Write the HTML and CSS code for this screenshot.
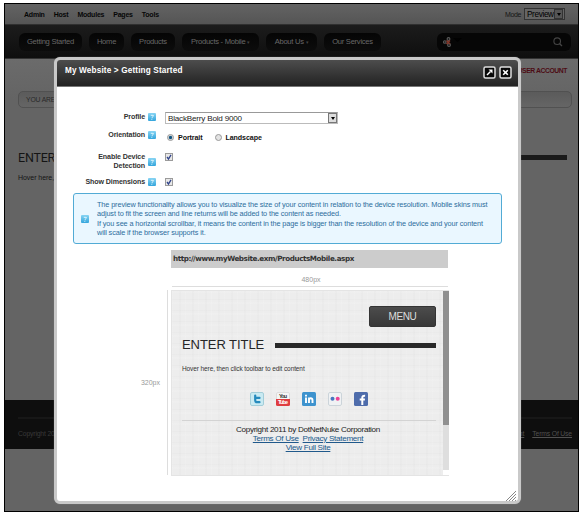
FILE: index.html
```html
<!DOCTYPE html>
<html lang="en">
<head>
<meta charset="utf-8">
<title>Getting Started</title>
<link rel="stylesheet" href="styles.css">
</head>
<body>
<svg width="0" height="0" class="defs">
  <defs>
    <linearGradient id="blue" x2="0" y2="1"><stop stop-color="#87d4f3"/><stop offset="1" stop-color="#34a5dc"/></linearGradient>
    <symbol id="help" viewBox="0 0 8 8"><rect width="8" height="8" rx="1" fill="url(#blue)"/><path d="M2.8 2.3h2.5v1L4 4.5v.8M3.8 6v.8" fill="none" stroke="#e9faff" stroke-width=".9"/></symbol>
    <symbol id="check" viewBox="0 0 8 8"><rect x=".5" y=".5" width="7" height="7" fill="#e8e8e8" stroke="#9b9b9b"/><path d="M2 4l1.5 2L6 1.8" fill="none" stroke="#32458b" stroke-width="1.3"/></symbol>
  </defs>
</svg>
<div class="frame">
  <header class="admin">
    <nav class="admin-links"><span>Admin</span><span>Host</span><span>Modules</span><span>Pages</span><span>Tools</span></nav>
    <div class="mode"><span>Mode</span><div class="mode-select"><span>Preview</span><i class="arrow"></i></div></div>
  </header>
  <nav class="main-nav">
    <span class="pill started">Getting Started</span><span class="pill home">Home</span><span class="pill products">Products</span><span class="pill mobile">Products - Mobile <i>▾</i></span><span class="pill about">About Us <i>▾</i></span><span class="pill services">Our Services</span>
    <div class="search">
      <svg width="22" height="12" viewBox="0 0 22 12"><g fill="none" stroke="#5c5c5c" stroke-width="1.1"><circle cx="2.8" cy="6" r="1.3"/><circle cx="6.5" cy="3" r="1.4"/><circle cx="7" cy="9" r="1.4"/></g><path d="M4.5 4.5l3.5 3.5M8 4.5L4.5 8" stroke="#85392c" stroke-width="1.5"/><path d="M11 2h9l-4.500 4z" fill="#010101"/></svg>
      <svg width="10" height="10" viewBox="0 0 10 10"><circle cx="4.2" cy="4.2" r="3.3" fill="none" stroke="#444" stroke-width="1.1"/><path d="M6.7 6.7L9 9" stroke="#444" stroke-width="1.3"/></svg>
    </div>
  </nav>
  <main class="page">
    <div class="account">USER ACCOUNT</div>
    <div class="crumb">YOU ARE</div>
    <div class="page-title"><h1>ENTER</h1><i></i></div>
    <p>Hover here,</p>
  </main>
  <footer class="footer"><div class="footer-row"><span>Copyright 2011</span><span class="footer-links"><u>Privacy Statement</u><u>Terms Of Use</u></span></div></footer>

  <section class="modal">
    <div class="modal-head">
      <h2>My Website &gt; Getting Started</h2>
      <svg width="13" height="13" viewBox="0 0 13 13"><rect x="1" y="1" width="11" height="11" rx="1.5" fill="#080808" stroke="#dedede" stroke-width="1.5"/><path d="M4 9l3.500-3.500" stroke="#fff" stroke-width="1.5"/><path d="M5.500 3.500H9.500v4z" fill="#fff"/></svg>
      <svg width="13" height="13" viewBox="0 0 13 13"><rect x="1" y="1" width="11" height="11" rx="1.5" fill="#080808" stroke="#dedede" stroke-width="1.5"/><path d="M4.200 4.200l4.600 4.600M8.800 4.200L4.200 8.800" stroke="#fff" stroke-width="1.6"/></svg>
    </div>
    <div class="form">
      <label>Profile</label><svg class="help"><use href="#help"/></svg>
      <div class="select"><span>BlackBerry Bold 9000</span><i class="arrow"></i></div>
      <label>Orientation</label><svg class="help"><use href="#help"/></svg>
      <div class="radios"><i class="radio on"></i><b>Portrait</b><i class="radio"></i><b>Landscape</b></div>
      <label class="two">Enable Device<br>Detection</label><svg class="help"><use href="#help"/></svg>
      <svg class="check raised"><use href="#check"/></svg>
      <label>Show Dimensions</label><svg class="help"><use href="#help"/></svg>
      <svg class="check"><use href="#check"/></svg>
    </div>
    <div class="info">
      <svg class="help"><use href="#help"/></svg>
      <div>The preview functionality allows you to visualize the size of your content in relation to the device resolution. Mobile skins must<br>adjust to fit the screen and line returns will be added to the content as needed.<br>If you see a horizontal scrollbar, it means the content in the page is bigger than the resolution of the device and your content<br>will scale if the browser supports it.</div>
    </div>
    <div class="url">http://www.myWebsite.exm/ProductsMobile.aspx</div>
    <div class="width">480px</div>
    <div class="stage">
      <div class="height">320px</div>
      <div class="device">
        <div class="screen">
          <div class="menu">MENU</div>
          <div class="title"><h3>ENTER TITLE</h3><i></i></div>
          <p>Hover here, then click toolbar to edit content</p>
          <div class="social">
            <svg viewBox="0 0 14 14"><rect x=".5" y=".5" width="13" height="13" rx="1.5" fill="#c9eaf2" stroke="#a3cdd8"/><path d="M5.200 3.500v4.700q0 2 2 2h2.300M5.200 5.900h4.300" fill="none" stroke="#258abd" stroke-width="2.200" stroke-linecap="round"/></svg>
            <svg viewBox="0 0 14 14"><rect x=".5" y=".5" width="13" height="13" rx="1.5" fill="#f5f5f5" stroke="#ddd"/><path d="M0 7h14v5.500q0 1.500-1.500 1.500h-11Q0 14 0 12.500z" fill="#df3d40"/><text x="7" y="5.900" class="yt" textLength="8">You</text><text x="7" y="12.300" class="yt tube" textLength="10">Tube</text></svg>
            <svg viewBox="0 0 14 14"><rect width="14" height="14" rx="1.5" fill="#3e93ce"/><path d="M4 5.500V11M4 2.800v1.700M7 11V5.500M7 8q0-1.800 1.700-1.800T10.500 8v3" fill="none" stroke="#fff" stroke-width="1.900"/></svg>
            <svg viewBox="0 0 14 14"><rect x=".5" y=".5" width="13" height="13" rx="1.5" fill="#f0f2f4" stroke="#ccd4da"/><circle cx="4.500" cy="6.800" r="2" fill="#4775be"/><circle cx="9.700" cy="6.800" r="2" fill="#ed4495"/></svg>
            <svg viewBox="0 0 14 14"><rect width="14" height="14" rx="1.5" fill="#4e6cab"/><path d="M8.300 13V5.700q0-2.200 2.800-2M5.700 7.600h5.200" fill="none" stroke="#fff" stroke-width="2"/></svg>
          </div>
          <div class="legal">Copyright 2011 by DotNetNuke Corporation<br><u>Terms Of Use</u>&nbsp; <u>Privacy Statement</u><br><u>View Full Site</u></div>
        </div>
        <div class="scroll"><i></i><b></b></div>
      </div>
    </div>
    <svg class="grip" width="12" height="12" viewBox="0 0 12 12"><path d="M0 11L10 1M3 11l7-7M6 11l4-4M9 11l1-1" stroke="#888" stroke-width="1"/></svg>
  </section>
</div>
</body>
</html>
```

FILE: styles.css
```css
* { box-sizing: border-box; }
body { margin: 0; padding: 3px 0 0 4px; background: #fff; font: 7px/9px "Liberation Sans", Arial, sans-serif; white-space: nowrap; overflow: hidden; height: 512px; }
h1, h2, h3, p { margin: 0; font-weight: normal; }
svg { display: block; flex: none; }
i { font-style: normal; flex: none; }
.defs { position: absolute; }
.frame { position: relative; width: 575px; height: 509px; border: 1px solid #000; background: #646464; overflow: hidden; }

.admin { height: 21px; padding: 0 13px 0 19px; display: flex; justify-content: space-between; align-items: center; background: linear-gradient(#636363, #555); border-bottom: 1px solid #303030; }
.admin-links { display: flex; gap: 9px; font-weight: bold; color: #070707; letter-spacing: -.22px; }
.mode { display: flex; align-items: center; gap: 3px; color: #151515; letter-spacing: -.4px; }
.mode-select { display: flex; align-items: center; justify-content: space-between; width: 41px; height: 12px; padding: 0 1px 0 2px; background: #656565; border: 1px solid #333; font-size: 8.2px; color: #000; letter-spacing: -.35px; }
.arrow { width: 9px; height: 10px; background: #ddd; border: 1px solid #777; display: grid; place-items: center; }
.arrow::after { content: ""; border: 2.5px solid transparent; border-top: 3px solid #000; border-bottom: 0; }
.mode .arrow { background: #555; border-color: #333; }

.main-nav { height: 34px; padding: 0 7px 0 14px; display: flex; align-items: center; background: linear-gradient(#1c1c1c, #0e0e0e); border-bottom: 1px solid #333; color: #686868; }
.pill { height: 18px; line-height: 18px; border-radius: 6px; background: linear-gradient(#050505, #0c0c0c); text-align: center; margin-right: 7px; letter-spacing: -.27px; font-size: 7.6px; }
.pill i { font-size: 5px; color: #444; }
.started { width: 63px; } .home { width: 35px; } .products { width: 44px; } .mobile { width: 77px; } .about { width: 51px; } .services { width: 57px; }
.search { margin-left: auto; width: 134px; height: 18px; border-radius: 6px; background: #060606; padding: 0 8px 0 5px; display: flex; align-items: center; justify-content: space-between; }

.page { height: 341px; padding: 6px 6px 0 13px; background: linear-gradient(#6b6b6b, #646464 40px); color: #141414; }
.account { text-align: right; padding-right: 5px; font-weight: bold; font-size: 6.8px; letter-spacing: -.42px; color: #4d0c14; line-height: 11px; }
.crumb { margin-top: 15px; height: 17px; border: 1px solid #515151; border-radius: 5px; background: linear-gradient(#5b5b5b, #656565); padding-left: 7px; line-height: 15px; font-size: 6.8px; letter-spacing: -.15px; color: #292929; }
.page-title { display: flex; align-items: center; margin: 39px 5px 0 0; height: 20px; }
.page-title h1 { width: 115px; font: 12.5px "Roboto", sans-serif; letter-spacing: -.2px; }
.page-title i { flex: 1; height: 5px; background: #1a1a1a; }
.page p { margin-top: 6px; font-size: 7px; letter-spacing: -.05px; }
.footer { height: 49px; background: #0e0e0e; padding: 17px 6px 0 13px; color: #393939; font-size: 6.8px; }
.footer-row { border-top: 2px solid #171717; padding-top: 10px; display: flex; justify-content: space-between; letter-spacing: -.15px; }
.footer-links { display: flex; gap: 8px; color: #515151; }

.modal { position: absolute; left: 49px; top: 53px; width: 467px; height: 447px; background: #fff; border: 3px solid #c9c9c9; border-radius: 6px; box-shadow: 0 0 1px #999; overflow: hidden; }
.modal-head { height: 27px; padding: 0 6px 0 8px; display: flex; align-items: center; gap: 3px; background: linear-gradient(#4d4d4d, #222); border-bottom: 1px solid #777; }
.modal-head svg { margin-top: -1px; }
.modal-head h2 { flex: 1; margin-top: -6px; font-size: 8.2px; font-weight: bold; color: #fff; letter-spacing: .15px; }
.form { margin-top: 22px; padding-left: 8px; display: grid; grid-template-columns: 80px 8px 1fr; grid-template-rows: 18px 18px 29px 14px; column-gap: 3px; font-size: 7.1px; color: #222; }
.form label { font-weight: bold; text-align: right; color: #333; align-self: start; padding-top: 4px; letter-spacing: -.1px; }
.help { width: 8px; height: 8px; margin-top: 4px; }
.form label.two { padding-top: 8px; }
.two + .help { margin-top: 13px; }
.select { margin: 3px 0 0 6px; width: 173px; height: 12px; padding: 0 0 0 2px; display: flex; align-items: center; justify-content: space-between; border: 1px solid #bbb; border-top-color: #999; font-size: 8.1px; letter-spacing: -.2px; color: #222; }
.radios { display: flex; align-items: center; height: 9px; margin: 6px 0 0 8px; }
.radios b { margin: 2px 0 0 4px; letter-spacing: -.09px; color: #111; }
.radio { width: 7px; height: 7px; border: 1px solid #999; border-radius: 50%; background: #e3e3e3; }
.radio.on { background: radial-gradient(circle, #115480 35%, #ddd 60%); }
.radio:nth-of-type(2) { margin-left: 12px; }
.check { width: 8px; height: 8px; margin: 4px 0 0 6px; }
.check.raised { margin-top: 8px; }

.info { margin: 5px 16px 0; height: 51px; border: 1.5px solid #52abd5; border-radius: 3px; background: #eaf7ff; padding: 1px 7px; display: flex; align-items: center; gap: 8px; color: #2c6d9d; font-size: 7.3px; letter-spacing: -.11px; line-height: 9.4px; }
.info .help { margin: 0; }
.url { margin: 6px 0 0 114px; width: 277px; height: 18px; background: #ccc; padding-left: 2px; font: bold 7.2px/18px "DejaVu Sans", sans-serif; letter-spacing: -.42px; color: #333; }
.width { margin-left: 115px; width: 276px; height: 19px; padding: 7px 0 0 2px; text-align: center; color: #999; font-size: 7px; border-bottom: 1px solid #ddd; }
.stage { display: flex; margin-top: 3px; }
.height { width: 111px; height: 185px; border-right: 1px solid #ddd; display: flex; justify-content: flex-end; align-items: center; padding-right: 7px; color: #999; }
.device { margin-left: 3px; width: 278px; height: 186px; border: 1px solid #e4e4e4; border-right: 0; display: flex; background-color: #ededed; background-image: repeating-linear-gradient(90deg, #ffffff18 0 1px, transparent 1px 7px, #00000003 7px 9px, transparent 9px 13px), repeating-linear-gradient(#ffffff18 0 2px, transparent 2px 8px, #00000003 8px 9px, transparent 9px 11px); }
.screen { flex: 1; padding: 15px 7px 0 10px; }
.menu { margin-left: auto; width: 67px; height: 21px; border-radius: 2px; background: linear-gradient(#4c4c4c, #383838); border: 1px solid #343434; color: #ddd; font-size: 10px; line-height: 20px; text-align: center; letter-spacing: -.4px; }
.title { display: flex; align-items: center; height: 18px; margin-top: 9px; gap: 11px; }
.title h3 { width: 82px; font-size: 13px; letter-spacing: -.06px; line-height: 18px; color: #262626; }
.title i { flex: 1; height: 5px; background: #292929; }
.screen p { margin-top: 11px; font-size: 6.5px; letter-spacing: -.1px; color: #333; line-height: 8px; }
.social { display: flex; gap: 12px; padding-left: 68px; margin-top: 19px; }
.social svg { width: 14px; height: 14px; }
.yt { font: bold 5.5px "Liberation Sans", sans-serif; text-anchor: middle; fill: #333; }
.tube { fill: #fff; }
.legal { border-top: 1px solid #d3d3d3; margin-top: 14px; padding: 4px 2px 0 0; font-size: 8.1px; letter-spacing: -.3px; line-height: 9px; text-align: center; color: #222; }
.legal u { color: #20598b; }
.scroll { width: 6px; background: #dedede; display: flex; flex-direction: column; justify-content: space-between; }
.scroll i { height: 134px; background: #909090; }
.scroll b { height: 5px; background: #fff; }
.grip { position: absolute; right: 0; bottom: -1px; }
```
